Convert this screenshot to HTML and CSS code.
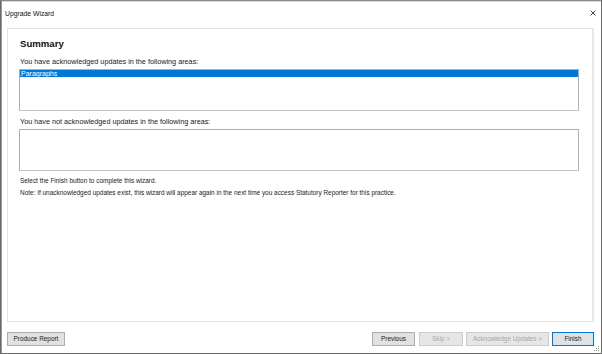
FILE: index.html
```html
<!DOCTYPE html>
<html lang="en">
<head>
  <meta charset="UTF-8" />
  <title>Upgrade Wizard</title>
  <link rel="stylesheet" href="styles.css">
</head>
<body>
  <div class="window">
    <div class="title_bar">
      <span class="title">Upgrade Wizard</span>
      <svg class="close" width="6" height="6" viewBox="0 0 6 6">
        <path d="M0.5 0.5 L5.5 5.5 M5.5 0.5 L0.5 5.5" stroke="#333" stroke-width="0.9" />
      </svg>
    </div>
    <div class="panel">
      <h2>Summary</h2>
      <p class="label first_label">You have acknowledged updates in the following areas:</p>
      <div class="list_box">
        <div class="list_item selected">Paragraphs</div>
      </div>
      <p class="label second_label">You have not acknowledged updates in the following areas:</p>
      <div class="list_box"></div>
      <p class="note finish_note">Select the Finish button to complete this wizard.</p>
      <p class="note">Note: If unacknowledged updates exist, this wizard will appear again in the next time you access Statutory Reporter for this practice.</p>
    </div>
    <div class="footer">
      <button class="btn btn_report">Produce Report</button>
      <div class="nav_buttons">
        <button class="btn btn_prev">Previous</button>
        <button class="btn btn_skip" disabled>Skip &gt;</button>
        <button class="btn btn_ack" disabled>Acknowledge Updates &gt;</button>
        <button class="btn btn_finish">Finish</button>
      </div>
    </div>
    <svg class="grip" width="6" height="6" viewBox="0 0 6 6">
      <rect x="4" y="0" width="1" height="1" fill="#999" />
      <rect x="2" y="2" width="1" height="1" fill="#999" />
      <rect x="4" y="2" width="1" height="1" fill="#999" />
      <rect x="0" y="4" width="1" height="1" fill="#999" />
      <rect x="2" y="4" width="1" height="1" fill="#999" />
      <rect x="4" y="4" width="1" height="1" fill="#999" />
    </svg>
  </div>
</body>
</html>
```

FILE: styles.css
```css
body {
  margin: 0;
  background: #fff;
  font-family: 'Liberation Sans', Arial, sans-serif;
  color: #1a1a1a;
}
.window {
  position: relative;
  box-sizing: border-box;
  width: 602px;
  height: 354px;
  border: 1px solid #6a6a6a;
  border-top: 1px solid #8a8a8a;
  box-shadow: inset 1px 0 0 #9a9a9a, inset 0 1px 0 #d8d8d8;
  display: flex;
  flex-direction: column;
  background: #fff;
}
.title_bar {
  height: 27px;
  display: flex;
  align-items: center;
  justify-content: space-between;
  padding: 0 5px 3px 4px;
  box-sizing: border-box;
}
.title {
  font-size: 6.8px;
  color: #111;
}
.close {
  display: block;
}
.panel {
  flex: 1;
  margin: 0 7px 0 6px;
  border: 1px solid #e2e2e2;
  border-right: 2px solid #e8e8e8;
  padding: 9px 13px 0 11px;
  display: flex;
  flex-direction: column;
}
.panel h2 {
  margin: 0 0 0 1px;
  font-size: 9.6px;
  line-height: 12px;
  font-weight: bold;
  color: #111;
}
.label {
  margin: 0;
  padding-left: 1px;
  font-size: 7.25px;
  line-height: 9px;
  color: #1a1a1a;
}
.first_label {
  margin-top: 7px;
  margin-bottom: 3px;
}
.second_label {
  margin-top: 6px;
  margin-bottom: 3px;
}
.list_box {
  height: 40px;
  border: 1px solid #adadad;
  border-bottom-color: #c4c4c4;
  background: #fff;
}
.list_item {
  height: 7px;
  line-height: 7px;
  font-size: 7px;
  padding-left: 1px;
}
.selected {
  background: #0078d7;
  color: #fff;
}
.note {
  margin: 4px 0 0;
  padding-left: 1px;
  font-size: 6.45px;
  line-height: 8px;
  color: #1a1a1a;
}
.finish_note {
  margin-top: 6px;
}
.footer {
  height: 31px;
  box-sizing: border-box;
  padding: 10px 7px 0 6px;
  display: flex;
  justify-content: space-between;
  align-items: flex-start;
}
.nav_buttons {
  display: flex;
  gap: 3px;
}
.btn {
  height: 14px;
  box-sizing: border-box;
  padding: 0;
  border: 1px solid #adadad;
  background: #e1e1e1;
  font-family: 'Liberation Sans', Arial, sans-serif;
  font-size: 6.4px;
  color: #1a1a1a;
  line-height: 12px;
  text-align: center;
}
.btn:disabled {
  color: #a6a6a6;
  border-color: #cccccc;
  background: #e6e6e6;
}
.btn_report { width: 58px; }
.btn_prev { width: 43px; margin-right: 1px; }
.btn_skip { width: 44px; }
.btn_ack { width: 83px; }
.btn_finish {
  width: 42px;
  border-color: #0078d7;
  box-shadow: inset 0 0 0 1px #cfe3f5;
}
.grip {
  position: absolute;
  right: 1px;
  bottom: 1px;
}
```
